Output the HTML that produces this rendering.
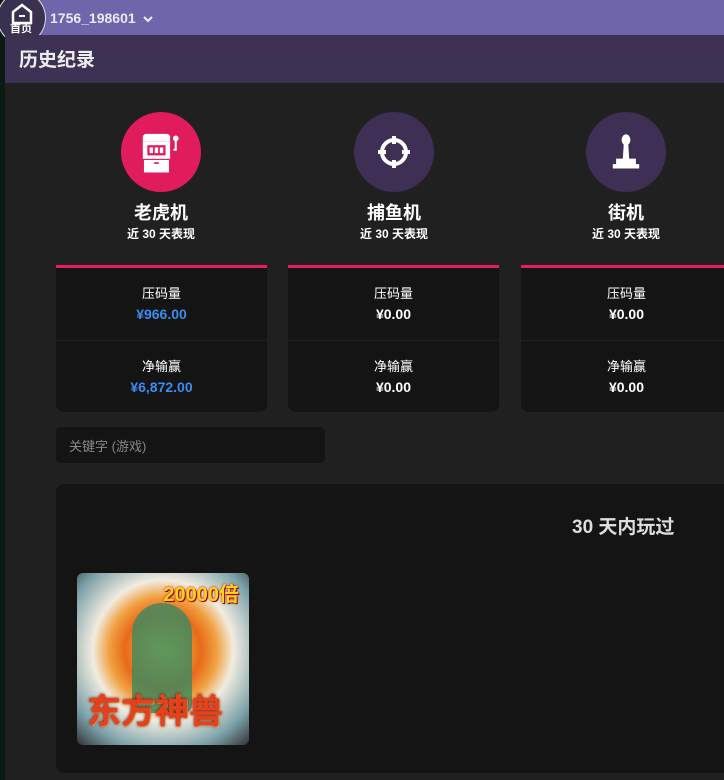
<!DOCTYPE html>
<html><head><meta charset="utf-8"><style>
*{margin:0;padding:0;box-sizing:border-box}
body{width:724px;height:780px;overflow:hidden;background:#202020;font-family:"Liberation Sans","Noto Sans CJK SC",sans-serif;color:#fff;position:relative}
.strip{position:absolute;left:0;top:0;width:5px;height:780px;background:#0c1a14}
.top{position:absolute;left:5px;top:0;right:0;height:35px;background:#6f65ab}
.hdr{position:absolute;left:5px;top:35px;right:0;height:48px;background:#3e3254}
.home{position:absolute;left:-3px;top:-8px;width:49px;height:52px;border-radius:50%;border:1px solid #ddd;background:#3a3050;overflow:hidden}
.uid{position:absolute;left:45px;top:10px;font-size:14px;color:#ece9f6;font-weight:bold}
.cat{position:absolute;top:112px;width:120px;text-align:center}
.circ{width:80px;height:80px;border-radius:50%;margin:0 auto;display:flex;align-items:center;justify-content:center}
.cat h3{font-size:18px;margin-top:10px;font-weight:bold;line-height:22px}
.cat p{font-size:12px;margin-top:2px;font-weight:bold;line-height:16px}
.card{position:absolute;top:265px;width:211px;height:147px;background:#141414;border-top:3px solid #e41f5b;border-radius:0 0 8px 8px;text-align:center}
.card .row{height:72px;padding-top:18px;font-size:13px;line-height:16px}
.card .row+.row{border-top:1px solid #222}
.card b{display:block;font-size:14px;margin-top:4px;font-weight:bold}
.blue{color:#3c8cf0}
.search{position:absolute;left:56px;top:427px;width:269px;height:36px;background:#141414;border-radius:5px;color:#888;font-size:13px;padding:9px 13px}
.panel{position:absolute;left:56px;top:484px;width:700px;height:289px;background:#141414;border-radius:8px}
.ptitle{position:absolute;left:516px;top:28px;font-size:19px;color:#ddd;font-weight:bold}
.game{position:absolute;left:21px;top:89px;width:172px;height:172px;border-radius:6px;overflow:hidden;background:radial-gradient(circle at 50% 45%,#f5d24a 0,#e86a1a 30%,#f0a040 42%,#f1ece0 55%,#7aa0a8 80%,#333 100%)}
</style></head><body>
<div class="strip"></div>
<div class="top"><div class="uid">1756_198601 &nbsp;<svg width="10" height="8" viewBox="0 0 10 8"><path d="M1 2 L5 6 L9 2" stroke="#eee" stroke-width="2" fill="none"/></svg></div></div>
<div class="home"><svg width="49" height="34" viewBox="0 0 49 34" style="position:absolute;left:0;top:0"><path d="M15 19 L24 12 L33 19 V30 H15 Z" fill="none" stroke="#fff" stroke-width="2.5"/><rect x="21" y="22" width="6" height="2" fill="#fff"/></svg><div style="position:absolute;left:12px;top:30px;font-size:11px;line-height:13px;font-weight:bold">首页</div></div>
<div class="hdr"><div style="position:absolute;left:14px;top:10px;font-size:19px;color:#eee;font-weight:bold">历史纪录</div></div>

<div class="cat" style="left:101px"><div class="circ" style="background:#e01c5c"><svg width="46" height="50" viewBox="0 0 40 44" fill="#fff"><path d="M7 6 h18 a3 3 0 0 1 3 3 v4 H4 v-4 a3 3 0 0 1 3-3z"/><rect x="4" y="13" width="24" height="15"/><rect x="8" y="16" width="16" height="9" fill="#e01c5c"/><rect x="10" y="18" width="3" height="5"/><rect x="14.5" y="18" width="3" height="5"/><rect x="19" y="18" width="3" height="5"/><rect x="5" y="29" width="22" height="11"/><rect x="14" y="31" width="4" height="1.5" fill="#e01c5c"/><circle cx="33" cy="10" r="2.5"/><path d="M33 12 v8 h-2" stroke="#fff" stroke-width="1.8" fill="none"/></svg></div><h3>老虎机</h3><p>近 30 天表现</p></div>
<div class="cat" style="left:334px"><div class="circ" style="background:#3e2f55"><svg width="40" height="40" viewBox="0 0 40 40"><circle cx="20" cy="20" r="12" fill="none" stroke="#fff" stroke-width="4"/><path d="M20 4v8M20 28v8M4 20h8M28 20h8" stroke="#fff" stroke-width="4"/></svg></div><h3>捕鱼机</h3><p>近 30 天表现</p></div>
<div class="cat" style="left:566px"><div class="circ" style="background:#3e2f55"><svg width="44" height="44" viewBox="0 0 40 40" fill="#fff"><ellipse cx="20" cy="9" rx="4" ry="5"/><path d="M18 12h4l1 16h-6z"/><path d="M11 26h18v5h3v4H8v-4h3z"/></svg></div><h3>街机</h3><p>近 30 天表现</p></div>

<div class="card" style="left:56px"><div class="row">压码量<b class="blue">¥966.00</b></div><div class="row">净输赢<b class="blue">¥6,872.00</b></div></div>
<div class="card" style="left:288px"><div class="row">压码量<b>¥0.00</b></div><div class="row">净输赢<b>¥0.00</b></div></div>
<div class="card" style="left:521px"><div class="row">压码量<b>¥0.00</b></div><div class="row">净输赢<b>¥0.00</b></div></div>

<div class="search">关键字 (游戏)</div>
<div class="panel"><div class="ptitle">30 天内玩过</div>
<div class="game"><div style="position:absolute;left:55px;top:30px;width:60px;height:110px;background:#3a8a60;border-radius:30px 30px 8px 8px;opacity:.8"></div><div style="position:absolute;right:10px;top:5px;font-size:20px;font-weight:bold;color:#ffd21a;text-shadow:0 0 2px #a00,1px 1px 0 #800">20000倍</div><div style="position:absolute;left:10px;bottom:12px;font-size:34px;font-weight:bold;color:#e8401a;text-shadow:0 0 3px #600,1px 1px 0 #fc6;font-family:'Noto Sans CJK SC',sans-serif">东方神兽</div></div>
</div>
</body></html>
